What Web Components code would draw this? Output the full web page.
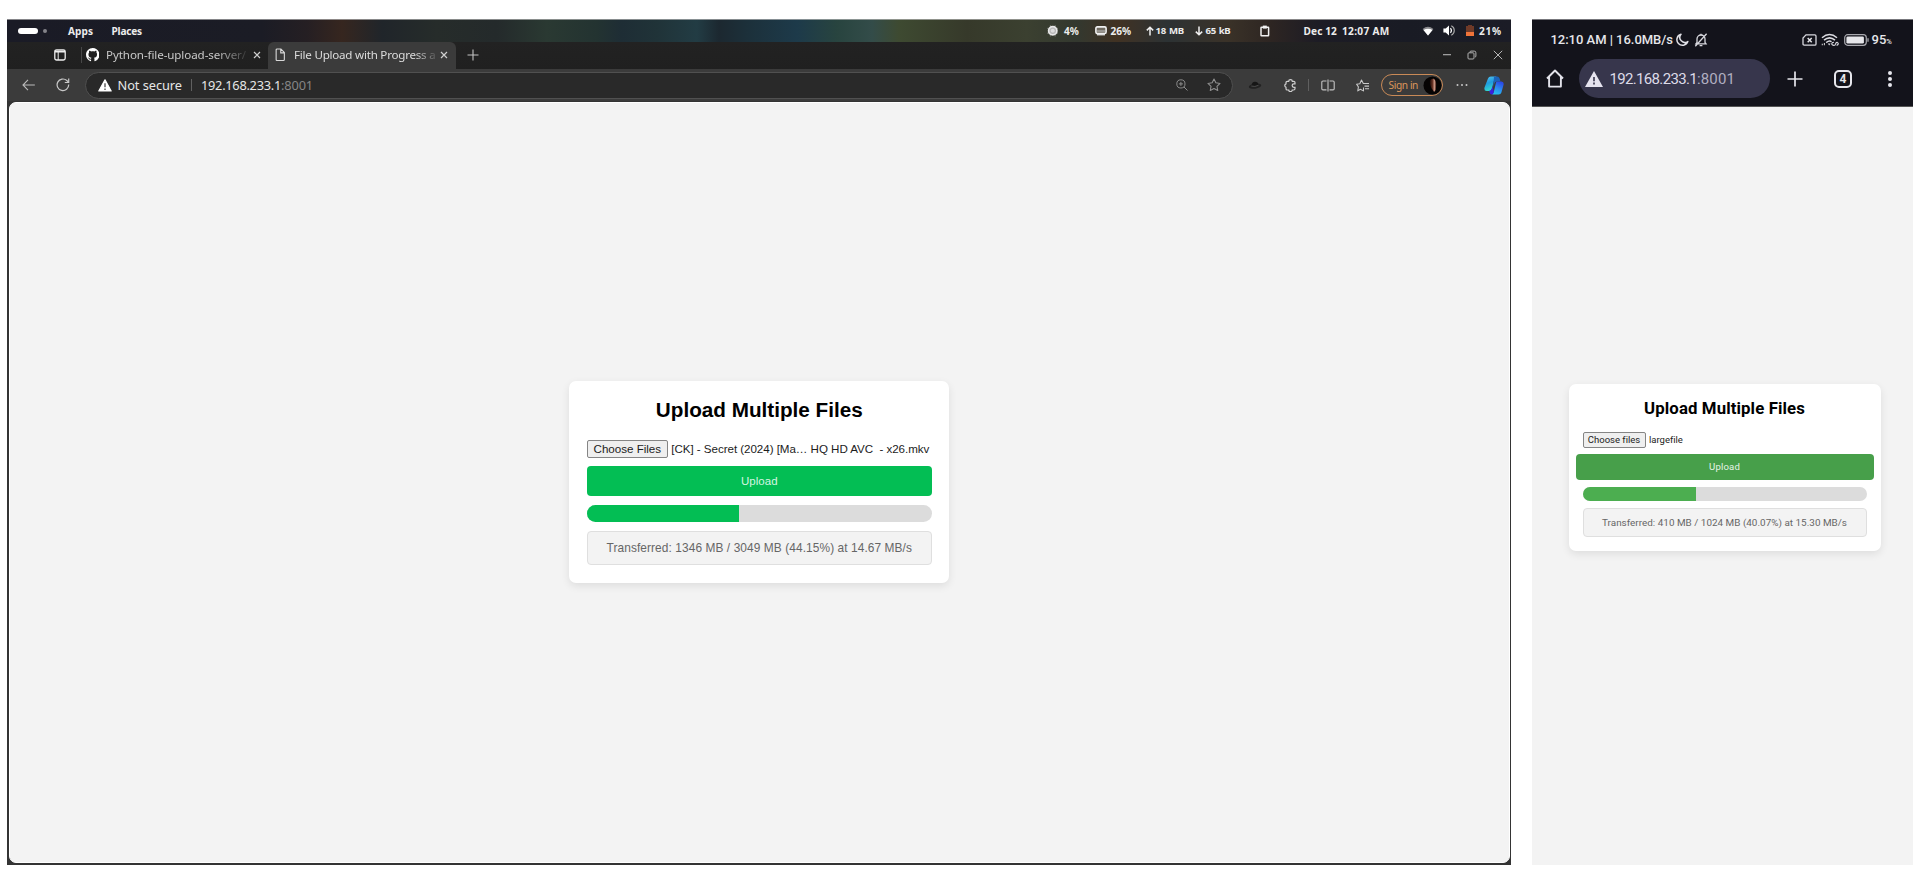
<!DOCTYPE html>
<html lang="en">
<head>
<meta charset="utf-8">
<title>File Upload with Progress</title>
<style>
body{margin:0;background:#fff;width:1920px;height:890px;overflow:hidden;font-family:"Noto Sans",sans-serif}
main{display:flex;gap:21px;padding:19px 7px 0 7px;align-items:flex-start}
</style>
</head>
<body>
<main>
  <desktop-window></desktop-window>
  <phone-screen></phone-screen>
</main>
<script>
const define = (name, html, setup) => {
  const t = document.createElement('template');
  t.innerHTML = html;
  customElements.define(name, class extends HTMLElement {
    connectedCallback() {
      if (this.shadowRoot) return;
      this.attachShadow({mode: 'open'}).append(t.content.cloneNode(true));
      if (setup) setup(this, this.shadowRoot);
    }
  });
};

const ICONS = {
  cpu: ['0 0 12 12', '<circle cx="6" cy="6" r="4.300" fill="#aaa" stroke="#e8e8e8" stroke-width="1.8"/><circle cx="6" cy="6" r="2.200" fill="#ddd"/><path d="M3.5 0v12M8.5 0v12M0 3.5h12M0 8.5h12" stroke="#ddd" stroke-width=".6" opacity=".6"/>'],
  mem: ['0 0 12 10', '<rect x=".9" y=".9" width="10.2" height="6.6" rx="1.4" fill="#6f6a60" stroke="#f0f0f0" stroke-width="1.6"/><path d="M2 8.7h8" stroke="#ddd" stroke-width="1.4"/><path d="M2 5h8" stroke="#ccc" stroke-width=".9"/>'],
  up: ['0 0 8 10', '<path d="M4 9.5V1.2M.8 4.4L4 1.2l3.2 3.2" fill="none" stroke="#f0f0f0" stroke-width="1.5"/>'],
  down: ['0 0 8 10', '<path d="M4 .5v8.3M.8 5.6L4 8.8l3.2-3.2" fill="none" stroke="#f0f0f0" stroke-width="1.5"/>'],
  clip: ['0 0 10 12', '<rect x="1" y="2.2" width="7.6" height="8.6" rx=".5" fill="none" stroke="#f0f0f0" stroke-width="1.5"/><rect x="2.8" y=".6" width="4" height="3" fill="#f0f0f0"/>'],
  wifi: ['0 0 12 10', '<path d="M6 9.6L.6 3.1Q6-1.500 11.4 3.1z" fill="#88888c"/><path d="M6 9.6L1.500 4.100Q6 1.200 10.500 4.100z" fill="#fff"/>'],
  sound: ['0 0 12 11', '<path d="M.4 3.400h2.300L6 .6v9.800L2.700 7.600H.4z" fill="#fff"/><path d="M7.400 3.300a3 3 0 010 4.400" stroke="#fff" stroke-width="1.3" fill="none"/><path d="M8.300.8a5.200 5.200 0 010 9.400" stroke="#aaa" stroke-width="1.1" fill="none"/>'],
  batt: ['0 0 8 11', '<path d="M2 0h4v1h2v10H0V1h2z" fill="#6f3a28"/><path d="M0 7h8v4H0z" fill="#ef7339"/>'],
  work: ['0 0 12 12', '<rect x=".8" y=".8" width="10.4" height="10.2" rx="1.8" fill="none" stroke="#eee" stroke-width="1.3"/><path d="M1 2.5h10" stroke="#eee" stroke-width="2"/><path d="M4.2 3v8" stroke="#eee" stroke-width="1"/>'],
  github: ['0 0 16 16', '<path fill="#fff" d="M8 0C3.58 0 0 3.58 0 8c0 3.54 2.29 6.53 5.47 7.59.4.07.55-.17.55-.38 0-.19-.01-.82-.01-1.49-2.01.37-2.53-.49-2.69-.94-.09-.23-.48-.94-.82-1.13-.28-.15-.68-.52-.01-.53.63-.01 1.08.58 1.23.82.72 1.21 1.87.87 2.33.66.07-.52.28-.87.51-1.07-1.78-.2-3.64-.89-3.64-3.95 0-.87.31-1.59.82-2.15-.08-.2-.36-1.02.08-2.12 0 0 .67-.21 2.2.82.64-.18 1.32-.27 2-.27s1.36.09 2 .27c1.53-1.04 2.2-.82 2.2-.82.44 1.1.16 1.92.08 2.12.51.56.82 1.27.82 2.15 0 3.07-1.87 3.75-3.65 3.95.29.25.54.73.54 1.48 0 1.07-.01 1.93-.01 2.2 0 .21.15.46.55.38A8.01 8.01 0 0016 8c0-4.42-3.58-8-8-8z"/>'],
  x: ['0 0 8 8', '<path d="M1 1l6 6M7 1L1 7" stroke="#d0d0d0" stroke-width="1.2"/>'],
  doc: ['0 0 11 14', '<path d="M2.2 1h4l3.6 3.700V12q0 1-1 1H2.200q-1 0-1-1V2q0-1 1-1zM6 1.200V5h3.800" fill="none" stroke="#d8d8d8" stroke-width="1.15"/>'],
  plus: ['0 0 12 12', '<path d="M6 .5v11M.5 6h11" stroke="#c4c4c4" stroke-width="1.1"/>'],
  min: ['0 0 10 10', '<path d="M1 4.700h8" stroke="#b4b4b4" stroke-width="1.1"/>'],
  restore: ['0 0 10 10', '<rect x="1" y="2.800" width="6" height="6.200" rx="1" fill="none" stroke="#b0b0b0"/><path d="M3 2.500V2q0-.9 1-.9h3.200q1.700 0 1.700 1.700V6q0 1-.9 1.100" fill="none" stroke="#b0b0b0"/>'],
  close: ['0 0 10 10', '<path d="M.8.8l8.400 8.400M9.200.8L.8 9.200" stroke="#b8b8b8" stroke-width="1"/>'],
  back: ['0 0 14 12', '<path d="M13.300 6H1M6.200.8L1 6l5.200 5.200" fill="none" stroke="#bcbcbc" stroke-width="1.100"/>'],
  reload: ['0 0 14 14', '<path d="M12.700 6.600A5.800 5.800 0 1 1 10.800 2.500l1.700 1.600" fill="none" stroke="#c8c8c8" stroke-width="1.200"/><path d="M12.700.6v3.900H8.800" fill="none" stroke="#c8c8c8" stroke-width="1.200"/>'],
  warn: ['0 0 14 13', '<path d="M7 .8L13.200 12H.8z" fill="#fff" stroke="#fff" stroke-width="1.200" stroke-linejoin="round"/><path d="M7 4.300v3.900M7 9.400v1.500" stroke="#555" stroke-width="1.400"/>'],
  zoom: ['0 0 12 12', '<circle cx="4.900" cy="4.900" r="4.100" fill="none" stroke="#8c8c8c"/><path d="M8 8l3.500 3.500M4.900 2.900v4M2.900 4.900h4" stroke="#8c8c8c" stroke-width="1"/>'],
  star: ['0 0 14 14', '<path d="M7 1l1.850 3.850 4.200.55-3.100 2.900.8 4.200L7 10.450 3.250 12.500l.8-4.200-3.100-2.900 4.200-.55z" fill="none" stroke="#909090" stroke-width="1.050" stroke-linejoin="round"/>'],
  hat: ['0 0 14 9', '<ellipse cx="7" cy="5.200" rx="6.300" ry="2.500" fill="#222" transform="rotate(-8 7 5)"/><path d="M3.500 4.800Q3.800.8 7 .8t3.500 3.400Q7 6 3.500 4.800z" fill="#161616"/><path d="M3.300 5q3.500 1.200 7.200-.7" stroke="#4c4c4c" fill="none"/>'],
  puzzle: ['0 0 13 13', '<path d="M3.300 2.300H4.700a1.800 1.700 0 013.600 0h1.400q1.300 0 1.300 1.300v1.200H9.900a1.700 1.700 0 000 3.500H11v1.200q0 1.500-1.400 1.500H8.300a1.800 1.600 0 01-3.600 0H3.300q-1.300 0-1.300-1.300V8.300a1.600 1.800 0 010-3.500V3.600q0-1.300 1.300-1.300z" fill="none" stroke="#d0d0d0" stroke-width="1.200"/>'],
  split: ['0 0 14 13', '<path d="M5.500 2H2q-1.200 0-1.200 1.200v6.500q0 1.200 1.200 1.200h3.500M8.500 2H12q1.200 0 1.200 1.200v6.500q0 1.200-1.200 1.200H8.500M7 .5v12" fill="none" stroke="#c4c4c4" stroke-width="1.100"/>'],
  favs: ['0 0 14 13', '<path d="M7.500 8.500v3.400L4.300 10.300 1.800 11.900l.6-4L.6 5.200l3.200-.5L5.500 1l1.800 3.500H13M8.500 7.100H13M9 9.700h4" fill="none" stroke="#c8c8c8" stroke-width="1.050" stroke-linejoin="round"/>'],
  avatar: ['0 0 20 20', '<defs><linearGradient id="g"><stop offset="0" stop-color="#1a0905"/><stop offset=".45" stop-color="#6e3627"/><stop offset=".7" stop-color="#cf9a88"/><stop offset="1" stop-color="#3a150c"/></linearGradient></defs><circle cx="10" cy="10" r="9.500" fill="#060404"/><path d="M7.500 4.500Q9 2.200 11.500 3q2.500 2 2.500 5.500l-.5 6q-1 2-2 2L9 13Q6.500 8 7.500 4.500z" fill="url(#g)"/>'],
  dots: ['0 0 12 4', '<g fill="#c8c8c8"><circle cx="1.500" cy="2" r="1"/><circle cx="6" cy="2" r="1"/><circle cx="10.500" cy="2" r="1"/></g>'],
  copilot: ['0 0 20 19', '<defs><linearGradient id="a" x2=".3" y2="1"><stop stop-color="#58c4ee"/><stop offset=".5" stop-color="#1f9be0"/><stop offset="1" stop-color="#31d6cf"/></linearGradient><linearGradient id="b" x1=".6" x2=".2" y2="1"><stop stop-color="#2a49e8"/><stop offset=".5" stop-color="#2c8cf0"/><stop offset="1" stop-color="#24c6f0"/></linearGradient></defs><path d="M4 2.500Q4.700.5 6.800.5h5.700q-1.800.6-2.300 3L7.800 13q-.6 2-2.700 2H2.500Q-.2 15 .5 11.500z" fill="url(#a)"/><path d="M10 .5h3q2 0 2.600 2l.9 3h-3.900q-1.500 0-2 1.500l-1.300 4z" fill="#1c62b8"/><path d="M12.500 5.500h5q2.800.2 2 3.600l-2.100 7.500q-.7 1.900-2.700 1.900H8q1.300-.6 1.800-2.500l2-8.500q.3-1.500.7-2z" fill="url(#b)"/><path d="M5.200 15q2-.4 2.500-2.300l.7-2.500 1.500 5.300q-.6 3-2.300 3Q6 18.500 5.200 15z" fill="#3a1fe0"/>'],
  moon: ['0 0 13 14', '<path d="M5 1.300A5.600 5.600 0 1 0 11.800 8.500 5 5 0 0 1 5 1.300z" fill="none" stroke="#e0e0e6" stroke-width="1.500" stroke-linejoin="round"/>'],
  bell: ['0 0 14 14', '<path d="M3 9.500V6a4 4 0 018 0v3.500l1 1.300H2zM5.600 12.600h2.800M12.600.8L1.300 13.300" fill="none" stroke="#d8d8de" stroke-width="1.300"/><path d="M7 .8v1.500" stroke="#d8d8de" stroke-width="1.300"/>'],
  sim: ['0 0 15 12', '<path d="M4 .9h8.800q1.200 0 1.200 1.200v7.800q0 1.200-1.200 1.200H2.200Q1 11.100 1 9.900V4z" fill="none" stroke="#d8d8de" stroke-width="1.300"/><path d="M5.700 4l4 4.200M9.700 4l-4 4.200" stroke="#e4e4e8" stroke-width="1.500"/>'],
  pwifi: ['0 0 18 14', '<path d="M1 4.800Q8.500-1.700 16 4.800M3 7.200Q8.500 2.600 14 7.200M5.200 9.600Q8.500 7 10.500 8.800" fill="none" stroke="#dcdce2" stroke-width="1.500"/><path d="M6.800 10.500h2.800L8.200 12.500z" fill="#dcdce2"/><path d="M1.300 12.300v-1.500M3.400 12.300v-2.300" stroke="#ccc" stroke-width="1.100"/><path d="M13 9.200q-2.200 0-2.200 1.600t2.200 1.600q1.200 0 1.600-1.600t1.700-1.400q1.200.4.900 1.600t-1.700 1.200" fill="none" stroke="#dcdce2" stroke-width="1.100"/>'],
  pbatt: ['0 0 25 12', '<rect x=".7" y=".7" width="21.600" height="10.600" rx="3" fill="none" stroke="#a8a8ae" stroke-width="1.200"/><rect x="2.400" y="2.400" width="17.500" height="7.200" rx="1.400" fill="#e6e6ea"/><path d="M24 4.200v3.600" stroke="#a8a8ae" stroke-width="1.300"/>'],
  home: ['0 0 18 19', '<path d="M3.100 8v9.600h11.800V8M1 9.500L9 1.500l8 8" fill="none" stroke="#e2e2ea" stroke-width="1.900" stroke-linejoin="round"/>'],
  pwarn: ['0 0 19 16', '<path d="M9.500 0L19 16H0z" fill="#e6e4ef"/><path d="M9.500 6v4.200M9.500 11.600v1.900" stroke="#37364c" stroke-width="1.700"/>'],
  pplus: ['0 0 16 16', '<path d="M8 .5v15M.5 8h15" stroke="#e6e6ec" stroke-width="1.700"/>'],
  more: ['0 0 6 18', '<g fill="#e6e6ec"><circle cx="3" cy="3" r="2"/><circle cx="3" cy="9" r="2"/><circle cx="3" cy="15" r="2"/></g>']
};

/* Inline vector icon: name, w, h */
define('ui-icon', '<style>:host{display:block}svg{display:block}</style>', (el, root) => {
  const [box, body] = ICONS[el.getAttribute('name')];
  const b = box.split(' ');
  const w = el.getAttribute('w') || b[2], h = el.getAttribute('h') || b[3];
  root.innerHTML += `<svg width="${w}" height="${h}" viewBox="${box}" preserveAspectRatio="none">${body}</svg>`;
});

/* Single line label whose tracking adapts to a given width */
define('fit-text', '<style>:host{display:block;white-space:pre}span{display:inline-block}</style><span><slot></slot></span>', (el, root) => {
  const want = +el.getAttribute('w'), s = root.querySelector('span');
  if (!want) return;
  const n = el.textContent.length;
  s.style.letterSpacing = ((want - s.getBoundingClientRect().width) / n) + 'px';
});

/* Row of tracks: the cols attribute lists the track widths */
define('track-row', '<style>:host{display:grid;align-items:center;box-sizing:border-box}</style><slot></slot>', el => {
  el.style.gridTemplateColumns = el.getAttribute('cols').split(' ').map(v => v + 'px').join(' ');
});

define('top-bar', `<style>
:host{display:block;height:23px;color:#ececec;font:700 10.1px "Noto Sans",sans-serif;
 background:linear-gradient(180deg,rgba(190,190,190,.65) 0 1px,transparent 1px),linear-gradient(90deg,#1a1b26 0,#1b1c25 255px,#251f23 300px,#36261f 335px,#20252a 375px,#262c2a 430px,#242a2b 490px,#2a3932 540px,#233331 590px,#1e2d35 615px,#203338 650px,#223c44 690px,#1c2830 712px,#1c303a 740px,#1d3a4a 790px,#28443f 830px,#334c49 865px,#3e4a31 892px,#36392a 960px,#3b4030 1020px,#33382f 1070px,#413223 1110px,#2c3234 1160px,#3a3228 1220px,#2d2522 1265px,#1d1c25 1310px,#191b24 1400px,#1b1c26 1504px)}
track-row{height:23.500px;padding-left:10.500px}
.pill{width:20px;height:6.500px;border-radius:4px;background:#fff}.dot{width:4px;height:4px;border-radius:2px;background:#83838a}
.n{font-size:9.600px;word-spacing:.5px}
</style>
<track-row cols="25 25.500 43.500 935 17.500 30.500 16 35.500 9.500 39 11 54.500 43.500 38.500 80 21 22.500 13.500 25">
<i class="pill"></i><i class="dot"></i><fit-text w="25">Apps</fit-text><fit-text w="30.500">Places</fit-text>
<ui-icon name="cpu" w="11.500" h="11.500"></ui-icon><fit-text w="15">4%</fit-text><ui-icon name="mem"></ui-icon><fit-text w="20.500">26%</fit-text>
<ui-icon name="up"></ui-icon><fit-text class="n" w="28.500">18 MB</fit-text><ui-icon name="down"></ui-icon><fit-text class="n" w="25">65 kB</fit-text>
<ui-icon name="clip"></ui-icon><fit-text w="33.500">Dec 12</fit-text><fit-text w="47.500">12:07 AM</fit-text>
<ui-icon name="wifi"></ui-icon><ui-icon name="sound"></ui-icon><ui-icon name="batt"></ui-icon><fit-text w="23">21%</fit-text>
</track-row>`);

define('tab-strip', `<style>
:host{display:grid;grid-template-columns:261px 188px 1fr auto;height:27px;background:linear-gradient(#222,#202020);color:#c8c8c8;font-size:11.600px}
track-row{height:25.500px}
.sep{width:1px;height:16px;background:#484848}
.a{padding-left:46.500px}
.b{height:27px;background:#3b3b3b;border-radius:6px 6px 0 0;padding:0 0 1.500px 7px;color:#dcdcdc}
.f1{-webkit-mask:linear-gradient(90deg,#000 110px,transparent 145px)}
.f2{-webkit-mask:linear-gradient(90deg,#000 120px,transparent 146px);overflow:hidden}
.c{padding-left:11px}.d{padding-right:8px}
</style>
<track-row class="a" cols="27 5 20.500 147 8"><ui-icon name="work"></ui-icon><i class="sep"></i><ui-icon name="github" w="13.500" h="13.500"></ui-icon><fit-text class="f1" w="140">Python-file-upload-server/</fit-text><ui-icon name="x"></ui-icon></track-row>
<track-row class="b" cols="19 146 8"><ui-icon name="doc" w="10.500" h="13.500"></ui-icon><fit-text class="f2" w="141.500">File Upload with Progress a</fit-text><ui-icon name="x"></ui-icon></track-row>
<track-row class="c" cols="12"><ui-icon name="plus"></ui-icon></track-row>
<track-row class="d" cols="25.500 26 10"><ui-icon name="min"></ui-icon><ui-icon name="restore"></ui-icon><ui-icon name="close"></ui-icon></track-row>`);

define('tool-bar', `<style>
:host{display:grid;grid-template-columns:78px 1148px 1fr;height:32px;background:#3b3b3b;align-items:center;color:#e6e6e6}
.url{height:27px;border:1px solid #505050;border-radius:14px;background:#292929;font-size:12.800px;padding-left:12px}
.sep{width:1px;height:12px;background:#606060}
.port{color:#858585}
.nav{padding-left:14.500px}.r{padding-left:15px}
.sign{display:flex;align-items:center;gap:5px;box-sizing:border-box;width:62.500px;height:22.500px;border:1.300px solid #c98a57;border-radius:12px;padding-left:7px;color:#dc965c;font-size:10.200px}
</style>
<track-row class="nav" cols="34 14"><ui-icon name="back" w="13.500" h="12"></ui-icon><ui-icon name="reload"></ui-icon></track-row>
<track-row class="url" cols="19.500 73 10.500 80 894.500 31 14"><ui-icon name="warn"></ui-icon><fit-text w="64.500">Not secure</fit-text><i class="sep"></i><fit-text w="80">192.168.233.1</fit-text><fit-text class="port" w="32">:8001</fit-text><ui-icon name="zoom"></ui-icon><ui-icon name="star"></ui-icon></track-row>
<track-row class="r" cols="35.500 24.500 12.500 35 25 75.500 28 20"><ui-icon name="hat"></ui-icon><ui-icon name="puzzle"></ui-icon><i class="sep"></i><ui-icon name="split"></ui-icon><ui-icon name="favs"></ui-icon><div class="sign"><fit-text w="29.500">Sign in</fit-text><ui-icon name="avatar" w="19" h="19"></ui-icon></div><ui-icon name="dots"></ui-icon><ui-icon name="copilot"></ui-icon></track-row>`);

/* Upload form. Sizes and colours come from custom properties set by the surrounding screen. */
define('upload-card', `<style>
:host{display:block;box-sizing:border-box;background:#fff;border-radius:7px;box-shadow:0 3px 9px rgba(0,0,0,.09);width:var(--cw);height:var(--ch);padding:var(--pt) var(--px) 0}
h1{margin:0;font-size:var(--h1);line-height:var(--h1l);height:var(--h1l);color:#000;display:flex;justify-content:center}
.file{display:flex;align-items:center;gap:3.500px;margin-top:var(--g1);height:var(--fh);font-size:var(--fs);color:#1c1c1c}
.choose{box-sizing:border-box;width:var(--bw);height:100%;border:1px solid #858585;border-radius:2px;background:#efefef;display:flex;align-items:center;justify-content:center}
.up{margin:var(--g2) var(--out) 0;height:var(--uh);border-radius:4px;background:var(--btn);color:var(--upc);font-size:var(--us);display:flex;align-items:center;justify-content:center}
.bar{margin-top:var(--g3);height:var(--ph);border-radius:9px;background:#dcdcdc;overflow:hidden}
.bar i{display:block;height:100%;width:var(--val);background:var(--fill)}
.st{box-sizing:border-box;margin-top:var(--g4);height:var(--sh);border:1px solid #dfdfdf;border-radius:4px;background:#f3f3f3;color:#666;font-size:var(--ss);display:flex;align-items:center;justify-content:center}
</style>
<h1><slot name="title"></slot></h1>
<div class="file"><div class="choose"><slot name="choose"></slot></div><slot name="name"></slot></div>
<div class="up"><slot name="upload"></slot></div>
<div class="bar"><i></i></div>
<div class="st"><slot name="status"></slot></div>`);

define('desktop-window', `<style>
:host{display:flex;flex-direction:column;width:1504px;height:846px;background:#343434}
.page{box-sizing:border-box;margin:1px 1.500px 0 2px;height:760.500px;border:1px solid #fff;border-radius:7px;background:#f3f3f3;padding:278px 0 0 559.300px;font-family:"Liberation Sans",Arial,sans-serif}
upload-card{--cw:380px;--ch:201.500px;--pt:15px;--px:17.500px;--h1:20.700px;--h1l:27px;--g1:16.500px;--fh:18px;--fs:11.600px;--bw:81px;--g2:8.500px;--out:0px;--uh:30px;--btn:#03be54;--fill:#03be54;--upc:#d5f5e1;--us:11.500px;--g3:8.500px;--ph:17.500px;--val:44.150%;--g4:8.500px;--sh:34.500px;--ss:11.900px}
</style>
<top-bar></top-bar><tab-strip></tab-strip><tool-bar></tool-bar>
<div class="page"><upload-card>
<fit-text slot="title" w="207">Upload Multiple Files</fit-text><fit-text slot="choose" w="67.500">Choose Files</fit-text><fit-text slot="name" w="258">[CK] - Secret (2024) [Ma… HQ HD AVC  - x26.mkv</fit-text><fit-text slot="upload" w="36.500">Upload</fit-text><fit-text slot="status" w="305.500">Transferred: 1346 MB / 3049 MB (44.15%) at 14.67 MB/s</fit-text>
</upload-card></div>`);

define('phone-screen', `<style>
:host{display:block;width:381px;height:846px;background:#f3f3f3;font-family:Roboto,sans-serif}
header{box-sizing:border-box;height:88px;background:#13131b;border-top:1px solid #77777c;border-bottom:1px solid #555;color:#e6e6ea}
.status{height:39px;padding-left:18.500px;font-size:13px;font-weight:500}
.nav{height:39px;padding-left:14px}
.url{width:191px;height:39px;border-radius:20px;background:#37364c;padding-left:6px;font-size:15px;color:#dddbe8}
.port{color:#b0aec0}
.pc{display:flex;align-items:baseline}.pc small{font-size:7.500px}
.tabs{box-sizing:border-box;width:18px;height:18px;border:2px solid #e6e6ec;border-radius:5px;display:flex;align-items:center;justify-content:center;font-size:12px;font-weight:700}
.page{padding:277px 0 0 36.500px}
upload-card{--cw:312px;--ch:167px;--pt:12.500px;--px:14px;--h1:16.800px;--h1l:22px;--g1:13px;--fh:16px;--fs:9.500px;--bw:63px;--g2:6px;--out:-7px;--uh:26.500px;--btn:#479f4a;--fill:#4cae50;--upc:#e6f3e6;--us:9.600px;--g3:6.500px;--ph:14px;--val:40.070%;--g4:7px;--sh:29px;--ss:9.900px}
</style>
<header>
<track-row class="status" cols="125 18 108.500 19 23 27.500 22"><fit-text w="122.500">12:10 AM | 16.0MB/s</fit-text><ui-icon name="moon"></ui-icon><ui-icon name="bell"></ui-icon><ui-icon name="sim"></ui-icon><ui-icon name="pwifi"></ui-icon><ui-icon name="pbatt"></ui-icon><span class="pc">95<small>%</small></span></track-row>
<track-row class="nav" cols="32.500 208.500 47 52.500 6"><ui-icon name="home"></ui-icon><track-row class="url" cols="25 87.500 40"><ui-icon name="pwarn" w="18"></ui-icon><fit-text w="87.500">192.168.233.1</fit-text><fit-text class="port" w="38">:8001</fit-text></track-row><ui-icon name="pplus"></ui-icon><div class="tabs">4</div><ui-icon name="more"></ui-icon></track-row>
</header>
<div class="page"><upload-card>
<fit-text slot="title" w="161">Upload Multiple Files</fit-text><fit-text slot="choose" w="52">Choose files</fit-text><fit-text slot="name" w="33.500">largefile</fit-text><fit-text slot="upload" w="31">Upload</fit-text><fit-text slot="status" w="245">Transferred: 410 MB / 1024 MB (40.07%) at 15.30 MB/s</fit-text>
</upload-card></div>`);
</script>
</body>
</html>
